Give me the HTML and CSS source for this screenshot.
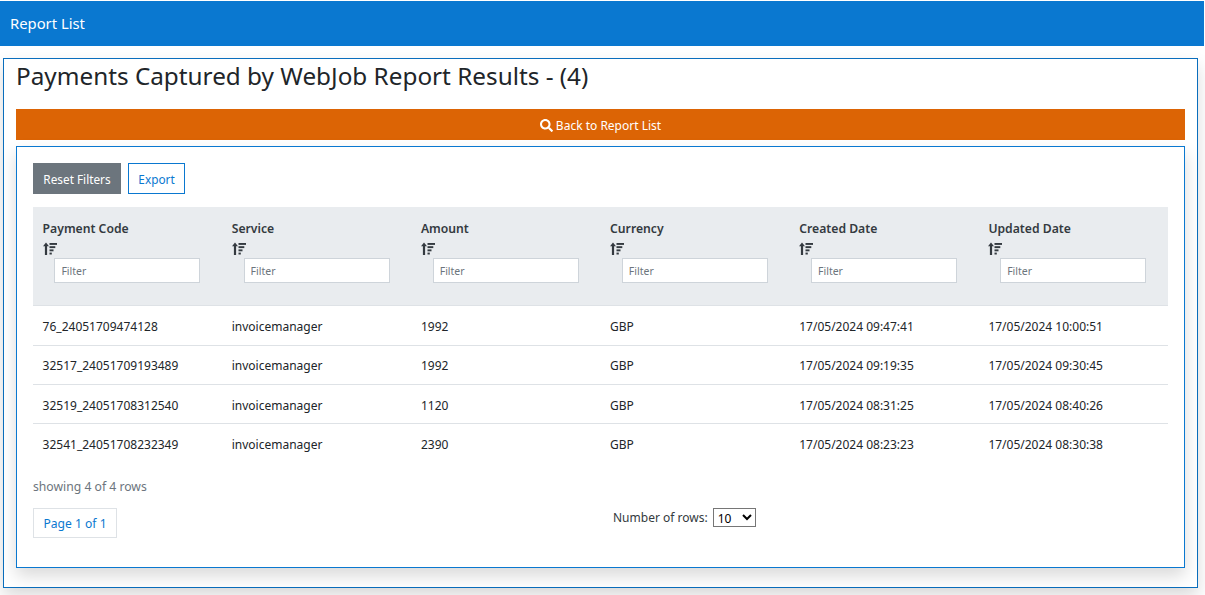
FILE: index.html
```html
<!DOCTYPE html>
<html lang="en">
<head>
<meta charset="utf-8">
<title>Report List</title>
<link rel="stylesheet" href="styles.css">
</head>
<body>
<nav class="topbar"><a class="brand">Report List</a></nav>
<main class="outer">
  <h1 class="title">Payments Captured by WebJob Report Results - (4)</h1>
  <a class="back">
    <svg class="search" viewBox="0 0 512 512" aria-hidden="true"><path fill="currentColor" d="M505 442.700L405.300 343c-4.500-4.500-10.600-7-17-7H372c27.600-35.300 44-79.700 44-128C416 93.100 322.900 0 208 0S0 93.100 0 208s93.100 208 208 208c48.300 0 92.700-16.400 128-44v16.300c0 6.400 2.500 12.500 7 17l99.700 99.700c9.400 9.400 24.600 9.400 33.900 0l28.300-28.300c9.400-9.400 9.400-24.600.1-34zM208 336c-70.700 0-128-57.200-128-128 0-70.700 57.200-128 128-128 70.700 0 128 57.200 128 128 0 70.700-57.200 128-128 128z"/></svg>
    <span class="back-text">Back to Report List</span>
  </a>
  <section class="inner">
    <div class="actions">
      <button class="btn btn-reset"><span class="btn-text">Reset Filters</span></button>
      <button class="btn btn-export"><span class="btn-text">Export</span></button>
    </div>
    <table class="grid">
      <thead>
        <tr>
          <th><div class="head">Payment Code</div><svg class="sort" viewBox="0 0 14 14" aria-hidden="true"><use href="#sorticon"/></svg><input class="filter" placeholder="Filter"></th>
          <th><div class="head">Service</div><svg class="sort" viewBox="0 0 14 14" aria-hidden="true"><use href="#sorticon"/></svg><input class="filter" placeholder="Filter"></th>
          <th><div class="head">Amount</div><svg class="sort" viewBox="0 0 14 14" aria-hidden="true"><use href="#sorticon"/></svg><input class="filter" placeholder="Filter"></th>
          <th><div class="head">Currency</div><svg class="sort" viewBox="0 0 14 14" aria-hidden="true"><use href="#sorticon"/></svg><input class="filter" placeholder="Filter"></th>
          <th><div class="head">Created Date</div><svg class="sort" viewBox="0 0 14 14" aria-hidden="true"><use href="#sorticon"/></svg><input class="filter" placeholder="Filter"></th>
          <th><div class="head">Updated Date</div><svg class="sort" viewBox="0 0 14 14" aria-hidden="true"><use href="#sorticon"/></svg><input class="filter" placeholder="Filter"></th>
        </tr>
      </thead>
      <tbody>
        <tr><td>76_24051709474128</td><td>invoicemanager</td><td>1992</td><td>GBP</td><td>17/05/2024 09:47:41</td><td>17/05/2024 10:00:51</td></tr>
        <tr><td>32517_24051709193489</td><td>invoicemanager</td><td>1992</td><td>GBP</td><td>17/05/2024 09:19:35</td><td>17/05/2024 09:30:45</td></tr>
        <tr><td>32519_24051708312540</td><td>invoicemanager</td><td>1120</td><td>GBP</td><td>17/05/2024 08:31:25</td><td>17/05/2024 08:40:26</td></tr>
        <tr><td>32541_24051708232349</td><td>invoicemanager</td><td>2390</td><td>GBP</td><td>17/05/2024 08:23:23</td><td>17/05/2024 08:30:38</td></tr>
      </tbody>
    </table>
    <div class="showing">showing 4 of 4 rows</div>
    <div class="pager">
      <div class="page-col"><span class="page-box"><span class="page-text">Page 1 of 1</span></span></div>
      <div class="rows-col"><label class="rows-label" for="rows">Number of rows:</label>
        <select class="rows-select" id="rows"><option>10</option><option>25</option><option>50</option></select>
      </div>
    </div>
  </section>
</main>
<svg class="defs" aria-hidden="true"><defs><g id="sorticon" fill="#343a40"><path d="M3 0.500L6 4.300H4.100V13H1.900V4.300H0z"/><rect x="6.500" y="1" width="7.500" height="1.900"/><rect x="6.500" y="4.200" width="5.800" height="1.900"/><rect x="6.500" y="7.400" width="4" height="1.900"/><rect x="6.500" y="10.600" width="2.300" height="1.900"/></g></defs></svg>
</body>
</html>
```
FILE: styles.css
```css
* { box-sizing: border-box; }
html, body { margin: 0; padding: 0; background: #fff; }
body {
  font-family: "Noto Sans", "Open Sans", sans-serif;
  font-size: 12px;
  color: #212529;
  height: 595px;
  overflow: hidden;
  padding-top: 1px;
}
.defs { width: 0; height: 0; position: absolute; }
.topbar {
  height: 45px;
  margin-right: 1px;
  background: #0a78d0;
  display: flex;
  align-items: center;
  padding: 0 0 2px 10px;
}
.brand { color: #fff; font-size: 14.800px; }
.outer {
  margin: 12px 7px 0 3px;
  height: 530px;
  border: 1px solid #0a6ebd;
  padding: 0 12px;
  background: #fff;
  box-shadow: 0 8px 16px rgba(0,0,0,.15);
}
.title {
  margin: 0 0 0 -1px;
  font-weight: 400;
  font-size: 24.300px;
  line-height: 34px;
  height: 50px;
  color: #212529;
  padding-left: 1px;
}
.back {
  display: flex;
  align-items: center;
  justify-content: center;
  gap: 3px;
  height: 31px;
  padding-top: 2px;
  background: #dc6405;
  color: #fff;
  font-size: 12px;
}
.search { width: 13px; height: 13px; margin-top: -1px; }
.inner {
  margin-top: 6px;
  height: 422px;
  border: 1px solid #0a78d0;
  padding: 16px;
  background: #fff;
  box-shadow: 0 8px 16px rgba(0,0,0,.15);
}
.actions { display: flex; gap: 7px; height: 31px; }
.btn {
  font: inherit;
  font-size: 11.800px;
  height: 31px;
  padding: 0;
  border: 1px solid;
  background: #fff;
}
.btn-reset { width: 88px; background: #6c757d; border-color: #6c757d; color: #fff; }
.btn-export { width: 57px; border-color: #0a78d0; color: #0a78d0; }
.grid {
  width: 1135px;
  margin-top: 13px;
  border-collapse: separate;
  border-spacing: 0;
  table-layout: fixed;
}
.grid thead tr { background: #e9ecef; height: 99px; }
.grid th {
  vertical-align: top;
  text-align: left;
  padding: 13px 10px 0 9.600px;
  font-weight: 600;
  font-size: 12.200px;
  color: #343a40;
  border-bottom: 1px solid #dee2e6;
}
.head { line-height: 18px; }
.sort { display: block; width: 14px; height: 14px; margin-top: 4px; }
.filter {
  display: block;
  width: 146px;
  height: 25px;
  margin: 2px 0 0 11.800px;
  border: 1px solid #ced4da;
  background: #fff;
  padding: 0 6px;
  font: inherit;
  font-weight: 400;
  font-size: 10.500px;
}
.filter::placeholder { color: #6c757d; opacity: 1; }
.grid td {
  height: 39.250px;
  padding: 2px 10px 0 9.600px;
  border-bottom: 1px solid #dee2e6;
  color: #212529;
  white-space: nowrap;
}
.grid tbody tr:first-child td { height: 39.750px; }
.grid tbody tr:last-child td { border-bottom: 0; }
.showing { margin-top: 14px; line-height: 18px; font-size: 12.200px; color: #6c757d; }
.pager { display: flex; margin-top: 12px; }
.page-col { width: 580px; }
.page-box {
  display: inline-flex;
  align-items: center;
  justify-content: center;
  width: 84px;
  height: 30px;
  padding-top: 1px;
  border: 1px solid #dee2e6;
  color: #0a78d0;
  font-size: 12.100px;
}
.rows-col { display: flex; align-items: flex-start; gap: 5px; }
.rows-label { line-height: 20px; color: #343a40; }
.rows-select {
  width: 43px;
  height: 19px;
  font-family: inherit;
  font-size: 12px;
  background: #fff;
  border: 1px solid #767676;
  border-radius: 0;
  padding: 0;
}
```
